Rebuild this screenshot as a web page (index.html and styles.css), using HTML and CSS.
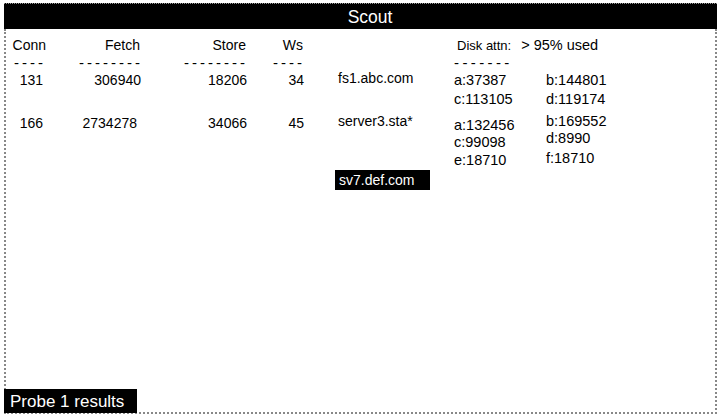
FILE: index.html
```html
<!DOCTYPE html>
<html>
<head>
<meta charset="utf-8">
<link rel="stylesheet" href="styles.css">
</head>
<body>
<div class="window">
  <div class="titlebar">Scout</div>
  <div class="panel">
    <div class="table">
      <div class="c1 hd">Conn</div>
      <div class="c2 hd">Fetch</div>
      <div class="c3 hd">Store</div>
      <div class="c4 hd">Ws</div>
      <div class="c6 hd disk-hd"><span>Disk attn:</span><span class="pct">&gt; 95% used</span></div>

      <div class="c1 dash">----</div>
      <div class="c2 dash">--------</div>
      <div class="c3 dash">--------</div>
      <div class="c4 dash">----</div>
      <div class="c6 dash dd">-------</div>

      <div class="c1 r3 num n1">131</div>
      <div class="c2 r3 num">306940</div>
      <div class="c3 r3 num">18206</div>
      <div class="c4 r3 num">34</div>
      <div class="c5 r3 host up2">fs1.abc.com</div>
      <div class="c6 r3 dv">a:37387</div>
      <div class="c7 r3 dv">b:144801</div>
      <div class="c6 r4 dv">c:113105</div>
      <div class="c7 r4 dv">d:119174</div>

      <div class="c1 r6 num n1">166</div>
      <div class="c2 r6 num n2">2734278</div>
      <div class="c3 r6 num">34066</div>
      <div class="c4 r6 num">45</div>
      <div class="c5 r6 host up2">server3.sta*</div>
      <div class="c6 r6 dv dn2">a:132456</div>
      <div class="c7 r6 dv up2">b:169552</div>
      <div class="c6 r7 dv">c:99098</div>
      <div class="c7 r7 dv up3">d:8990</div>
      <div class="c6 r8 dv">e:18710</div>
      <div class="c7 r8 dv up2">f:18710</div>

      <div class="c5 r9 sel"><span class="selbox">sv7.def.com</span></div>
    </div>
    <div class="status">Probe 1 results</div>
  </div>
</div>
</body>
</html>
```

FILE: styles.css
```css
html, body {
  margin: 0;
  padding: 0;
  background: #fff;
}
body {
  font-family: "Liberation Sans", Arial, sans-serif;
  color: #000;
}
.window {
  margin: 3px 0 0 4px;
  width: 713px;
  height: 411px;
  display: flex;
  flex-direction: column;
}
.titlebar {
  height: 26px;
  background: #000;
  color: #fff;
  font-size: 17.5px;
  line-height: 26px;
  text-align: center;
  padding-left: 19px;
  border-top: 1px dotted #999;
  box-sizing: border-box;
}
.panel {
  flex: 1;
  border: 2px dotted #888;
  border-top: none;
  display: flex;
  flex-direction: column;
  position: relative;
}
.table {
  display: grid;
  grid-template-columns: 44px 95px 110px 55px 140px 90px 1fr;
  grid-template-rows: 17px 18px 17px 20px 4px 20px 18px 19px 22px;
  padding-top: 8px;
  font-size: 14px;
}
.table > div {
  line-height: 17px;
  white-space: nowrap;
}
.c1 { grid-column: 1; text-align: right; padding-right: 3px; }
.c2 { grid-column: 2; text-align: right; padding-right: 4px; }
.c3 { grid-column: 3; text-align: right; padding-right: 8px; }
.c4 { grid-column: 4; text-align: right; padding-right: 6px; }
.c5 { grid-column: 5; padding-left: 28px; }
.c6 { grid-column: 6; padding-left: 4px; }
.c7 { grid-column: 7; padding-left: 6px; }
.r3 { grid-row: 3; }
.r4 { grid-row: 4; }
.r6 { grid-row: 6; }
.r7 { grid-row: 7; }
.r8 { grid-row: 8; }
.r9 { grid-row: 9; }
.table > .r3, .table > .r4, .table > .r6, .table > .r7, .table > .r8 {
  align-self: center;
}
.hd { grid-row: 1; font-size: 14px; }
.c1.hd { padding-right: 4px; }
.c2.hd { padding-right: 5px; }
.c3.hd { padding-right: 9px; }
.c4.hd { padding-right: 7px; }
.disk-hd {
  grid-column: 6 / span 2;
  padding-left: 7px;
  font-size: 13px;
  display: flex;
  gap: 10px;
}
.pct { font-size: 14.5px; }
.table > .dash {
  grid-row: 2;
  font-size: 15px;
  letter-spacing: 3px;
  line-height: 18px;
  text-align: left;
  padding-right: 0;
  align-self: center;
}
.c1.dash { padding-left: 8px; }
.c2.dash { padding-left: 29px; }
.c3.dash { padding-left: 39px; }
.c4.dash { padding-left: 18px; }
.table > .dd { padding-left: 4px; letter-spacing: 3.4px; }
.num.n1 { padding-right: 7px; }
.num.n2 { padding-right: 8px; }
.dv { font-size: 14.5px; }
.up2 { margin-top: -4px; }
.up3 { margin-top: -7px; }
.dn2 { margin-top: 4px; }
.sel { align-self: start; padding-left: 25px; }
.selbox {
  display: inline-block;
  background: #000;
  color: #fff;
  height: 20px;
  line-height: 20px;
  width: 91px;
  padding-left: 4px;
  font-size: 14px;
}
.status {
  margin-top: auto;
  margin-left: -2px;
  margin-bottom: -1px;
  align-self: flex-start;
  background: #000;
  color: #fff;
  font-size: 17px;
  height: 24px;
  line-height: 26px;
  width: 127px;
  padding-left: 6px;
}
```
